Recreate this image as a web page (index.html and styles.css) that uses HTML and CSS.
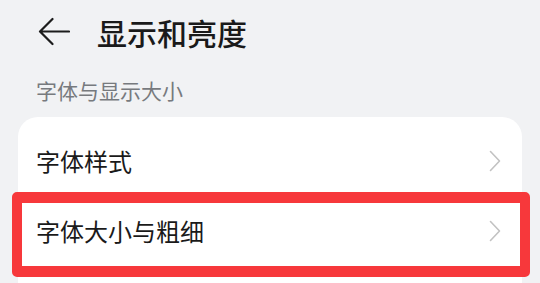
FILE: index.html
```html
<!DOCTYPE html>
<html lang="zh-CN">
<head>
<meta charset="utf-8">
<link rel="stylesheet" href="styles.css">
</head>
<body>
<div class="page">
  <header class="topbar">
    <svg class="back" width="32" height="30" viewBox="0 0 32 30">
      <path d="M31 14.5H2.5M14.5 2L2 14.5L14.5 27" fill="none" stroke="#1c1c1c" stroke-width="2.2" stroke-linecap="round" stroke-linejoin="round"/>
    </svg>
    <h1 class="title">显示和亮度</h1>
  </header>
  <div class="section-label">字体与显示大小</div>
  <div class="card">
    <div class="row">
      <span class="row-text">字体样式</span>
      <svg class="chev" width="12" height="22" viewBox="0 0 12 22"><path d="M1.5 1.5L10.5 11L1.5 20.5" fill="none" stroke="#c2c2c2" stroke-width="1.6" stroke-linecap="round" stroke-linejoin="round"/></svg>
    </div>
    <div class="row">
      <span class="row-text">字体大小与粗细</span>
      <svg class="chev" width="12" height="22" viewBox="0 0 12 22"><path d="M1.5 1.5L10.5 11L1.5 20.5" fill="none" stroke="#c2c2c2" stroke-width="1.6" stroke-linecap="round" stroke-linejoin="round"/></svg>
    </div>
    <div class="highlight"></div>
  </div>
</div>
</body>
</html>
```
FILE: styles.css
```css
html, body {
  margin: 0;
  padding: 0;
  background: #f1f2f4;
}
body {
  font-family: "Noto Sans CJK SC", "Noto Sans", sans-serif;
  color: #1a1a1a;
  width: 540px;
  height: 283px;
  overflow: hidden;
}
.page {
  display: flex;
  flex-direction: column;
}
.topbar {
  display: flex;
  align-items: center;
  height: 64px;
  padding-left: 38px;
}
.back {
  display: block;
  flex: none;
}
.title {
  margin: 0 0 0 27px;
  font-size: 30px;
  font-weight: 500;
  line-height: 1;
  color: #1a1a1a;
}
.section-label {
  height: 53px;
  display: flex;
  align-items: center;
  padding-left: 36px;
  font-size: 21px;
  line-height: 1;
  color: #777a7e;
}
.card {
  position: relative;
  margin: 0 18px;
  background: #ffffff;
  border-radius: 20px 20px 0 0;
  padding-top: 9px;
  height: 157px;
}
.row {
  height: 70px;
  display: flex;
  align-items: center;
  justify-content: space-between;
  padding: 0 21px 0 18px;
}
.row-text {
  font-size: 24px;
  line-height: 1;
  color: #1a1a1a;
}
.chev {
  display: block;
  flex: none;
}
.highlight {
  position: absolute;
  left: -6px;
  top: 75px;
  width: 518px;
  height: 85px;
  box-sizing: border-box;
  border: 10px solid #f7383b;
  border-top-width: 11px;
  border-bottom-width: 11px;
  border-radius: 5px;
}
```
